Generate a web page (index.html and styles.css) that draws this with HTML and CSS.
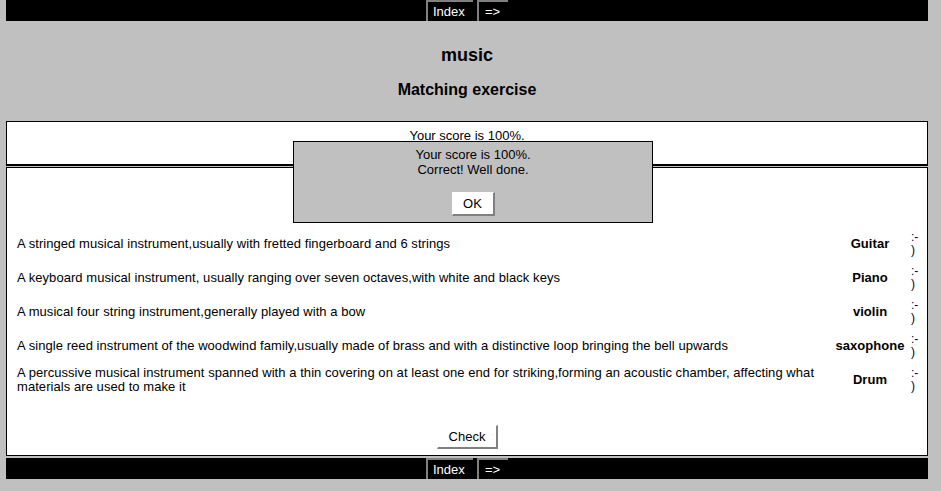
FILE: index.html
```html
<!DOCTYPE html>
<html>
<head>
<meta charset="utf-8">
<title>music</title>
<link rel="stylesheet" href="styles.css">
</head>
<body>
<div class="page">
  <div class="navbar">
    <span class="navbtn index">Index</span><span class="navbtn next">=&gt;</span>
  </div>
  <div class="titles">
    <h2 class="title">music</h2>
    <h3 class="subtitle">Matching exercise</h3>
  </div>
  <div class="box feedback">Your score is 100%.</div>
  <div class="box main">
    <div class="rows">
      <div class="row">
        <div class="desc">A stringed musical instrument,usually with fretted fingerboard and 6 strings</div>
        <div class="ans">Guitar</div>
        <div class="smile"><span>:-</span><span>)</span></div>
      </div>
      <div class="row">
        <div class="desc">A keyboard musical instrument, usually ranging over seven octaves,with white and black keys</div>
        <div class="ans">Piano</div>
        <div class="smile"><span>:-</span><span>)</span></div>
      </div>
      <div class="row">
        <div class="desc">A musical four string instrument,generally played with a bow</div>
        <div class="ans">violin</div>
        <div class="smile"><span>:-</span><span>)</span></div>
      </div>
      <div class="row">
        <div class="desc">A single reed instrument of the woodwind family,usually made of brass and with a distinctive loop bringing the bell upwards</div>
        <div class="ans">saxophone</div>
        <div class="smile"><span>:-</span><span>)</span></div>
      </div>
      <div class="row">
        <div class="desc">A percussive musical instrument spanned with a thin covering on at least one end for striking,forming an acoustic chamber, affecting what materials are used to make it</div>
        <div class="ans">Drum</div>
        <div class="smile"><span>:-</span><span>)</span></div>
      </div>
    </div>
    <div class="checkwrap"><button class="btn check">Check</button></div>
  </div>
  <div class="navbar footer">
    <span class="navbtn index">Index</span><span class="navbtn next">=&gt;</span>
  </div>
  <div class="popup">
    <div class="popmsg">Your score is 100%.<br>Correct! Well done.</div>
    <button class="btn ok">OK</button>
  </div>
</div>
</body>
</html>
```

FILE: styles.css
```css
html, body {
  margin: 0;
  padding: 0;
  background: #c0c0c0;
}
body {
  font-family: "Liberation Sans", Arial, sans-serif;
  font-size: 13px;
  color: #000;
}
.page {
  position: relative;
  width: 922px;
  margin-left: 6px;
}
.navbar {
  background: #000;
  height: 21px;
  display: flex;
  justify-content: center;
  gap: 4px;
}
.navbtn {
  color: #fff;
  font-size: 13px;
  line-height: 19px;
  height: 21px;
  box-sizing: border-box;
  border-top: 2px solid #808080;
  border-left: 2px solid #808080;
  white-space: nowrap;
}
.index {
  width: 47px;
  padding-left: 5px;
}
.next {
  width: 31px;
  padding-left: 6px;
}
.titles {
  text-align: center;
  padding-top: 24px;
  height: 100px;
  box-sizing: border-box;
}
.title {
  margin: 0;
  font-size: 18px;
  line-height: 20px;
  font-weight: bold;
}
.subtitle {
  margin: 15px 0 0;
  font-size: 16px;
  line-height: 20px;
  font-weight: bold;
}
.box {
  background: #fff;
  border: 1px solid #000;
  box-sizing: border-box;
}
.feedback {
  height: 45px;
  border-bottom-width: 2px;
  text-align: center;
  padding-top: 6px;
  line-height: 15px;
}
.main {
  margin-top: 1px;
  height: 289px;
  padding: 59px 5px 0 10px;
}
.rows {
  display: flex;
  flex-direction: column;
}
.row {
  display: grid;
  grid-template-columns: 1fr 80px 12px;
  align-items: center;
  height: 34px;
}
.desc {
  line-height: 14px;
  padding-right: 14px;
  letter-spacing: 0.06px;
}
.ans {
  font-weight: bold;
  text-align: center;
  letter-spacing: 0.05px;
  line-height: 14px;
  margin-top: -1px;
}
.smile {
  display: flex;
  flex-direction: column;
  font-size: 12px;
  line-height: 13px;
  color: #000033;
  padding-left: 1px;
}
.checkwrap {
  display: flex;
  justify-content: center;
  margin-top: 28px;
  padding-right: 4px;
}
.btn {
  font-family: "Liberation Sans", Arial, sans-serif;
  font-size: 13px;
  background: #fff;
  color: #000;
  border-style: solid;
  border-width: 1px 2px 2px 1px;
  border-color: #fff #808080 #808080 #fff;
  padding: 0;
  box-sizing: border-box;
}
.check {
  width: 61px;
  height: 24px;
}
.footer {
  margin-top: 2px;
}
.popup {
  position: absolute;
  left: 287px;
  top: 141px;
  width: 360px;
  height: 82px;
  box-sizing: border-box;
  background: #c0c0c0;
  border: 1px solid #000;
  display: flex;
  flex-direction: column;
  align-items: center;
  padding-top: 5px;
}
.popmsg {
  text-align: center;
  line-height: 15px;
}
.ok {
  margin-top: 15px;
  width: 43px;
  height: 24px;
}
```
